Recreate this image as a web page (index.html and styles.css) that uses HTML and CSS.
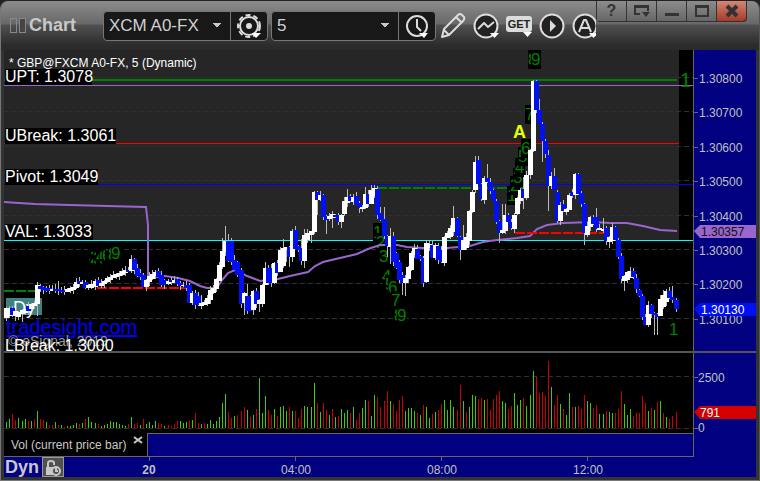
FILE: index.html
```
<!DOCTYPE html>
<html lang="en">
<head>
  <meta charset="UTF-8">
  <title>Chart</title>
  <link rel="stylesheet" href="styles.css">
</head>
<body>
  <div class="window">
    <header class="titlebar">
      <div class="toolbar">
        <span class="grip"></span>
        <h1>Chart</h1>
        <div class="combo">
          <select class="symbol" aria-label="Symbol"><option>XCM A0-FX</option></select>
          <button title="Settings">
            <svg width="26" height="26" viewBox="0 0 26 26">
              <circle class="teeth" cx="13" cy="13" r="11"/>
              <circle class="ring" cx="13" cy="13" r="9"/>
              <circle class="solid" cx="13" cy="13" r="3"/>
              <path class="drop" d="M16 20h9l-5 5z"/>
            </svg>
          </button>
        </div>
        <div class="combo combo-wide">
          <select class="interval" aria-label="Interval"><option>5</option></select>
          <button title="Time template">
            <svg width="26" height="26" viewBox="0 0 26 26">
              <circle class="ring" cx="13" cy="13" r="10"/>
              <path class="stroke" d="M13 6v8l4 4"/>
              <path class="drop" d="M15 20h9l-4 5z"/>
            </svg>
          </button>
        </div>
        <div class="tools">
          <button title="Draw">
            <svg width="26" height="26" viewBox="0 0 26 26">
              <path class="pencil" d="M2 24l2-8L18 2q2-2 4 0l2 2q1 2-1 4L9 22zM16 4l6 6M4 17l5 5"/>
            </svg>
          </button>
          <button title="Studies">
            <svg width="26" height="26" viewBox="0 0 26 26">
              <circle class="ring" cx="13" cy="13" r="11.500"/>
              <path class="stroke" d="M5 16l6-6 4 4 6-5"/>
              <path class="drop" d="M17 20h9l-4.500 5z"/>
            </svg>
          </button>
          <button title="GET">
            <svg width="26" height="26" viewBox="0 0 26 26">
              <rect class="solid" x="0" y="3" width="26" height="16" rx="3"/>
              <text class="get" x="13" y="15">GET</text>
              <path class="drop" d="M17 19h9l-4.500 5z"/>
            </svg>
          </button>
          <button title="Play">
            <svg width="26" height="26" viewBox="0 0 26 26">
              <circle class="ring" cx="13" cy="13" r="11.500"/>
              <path class="solid" d="M11 7l6 6-6 6z"/>
            </svg>
          </button>
          <button title="Annotate">
            <svg width="26" height="26" viewBox="0 0 26 26">
              <circle class="ring" cx="13" cy="13" r="11.500"/>
              <path class="stroke" d="M7 19l5-12h2l5 12M9 15h8"/>
              <path class="drop" d="M17 20h9l-4.500 5z"/>
            </svg>
          </button>
        </div>
      </div>
      <div class="controls">
        <button title="Help">?</button>
        <button title="Dock">
          <svg width="16" height="14" viewBox="0 0 16 14"><path d="M6 10H1V2h13v5M1 3h13"/><path class="fill" d="M8 8h8l-4 5z"/></svg>
        </button>
        <button title="Minimize">
          <svg width="16" height="14" viewBox="0 0 16 14"><path class="fill" d="M1 9h14v3H1z"/></svg>
        </button>
        <button title="Maximize">
          <svg width="16" height="14" viewBox="0 0 16 14"><path d="M2 2h12v10H2zM2 3h12"/></svg>
        </button>
        <button class="close" title="Close">
          <svg width="16" height="14" viewBox="0 0 16 14"><path class="cross" d="M3 2l10 10M13 2L3 12"/></svg>
        </button>
      </div>
    </header>

    <main>
      <svg class="pane" viewBox="4 50 752 301">
        <rect class="value-area" x="4" y="50" width="675" height="190"/>
        <g id="grid"></g>

        <path class="study red thin" d="M4 143.500H679"/>
        <path class="study violet thin" d="M4 85.500H693"/>
        <path class="study green" d="M4 80H677"/>
        <path class="study blue" d="M4 184.500H693"/>
        <path class="study cyan thin" d="M4 240.500H693"/>
        <path class="study green dashed" d="M4 291H40M377 188H525"/>

        <text class="title" x="9" y="67">* GBP@FXCM A0-FX, 5 (Dynamic)</text>
        <g id="levels"></g>

        <rect class="badge" x="6" y="298" width="36" height="17"/>
        <text class="badge-text" x="13" y="314">Dy</text>
        <a href="#"><text class="site" x="6" y="334">tradesight.com</text></a>
        <text class="copyright" x="8" y="346">© eSignal, 2019</text>
        <text class="level" x="5" y="351">LBreak: 1.3000</text>

        <g id="counts"></g>
        <text class="signal" x="513" y="138">A</text>

        <path class="study violet" d="M4 202L19 203 35 204 70 205 107 206 146 207 148 225 148 276 155 277 165 276 178 278 190 281 200 286 207 288 217 288 222 280 228 273 235 270 240 272 247 276 255 279 260 281 278 279 290 276 308 272 315 266 323 262 340 258 357 254 368 249 380 245 397 245 407 247 423 248 447 248 470 246 483 242 497 240 517 238 530 236 537 229 547 225 563 223 593 222 610 223 627 223 643 226 660 230 677 231"/>
        <path class="study red dashed" d="M97 288H187M515 233H605"/>
        <g id="candles"></g>

        <rect class="axis" x="693" y="50" width="63" height="301"/>
        <path class="axis-line" d="M693.500 50V351"/>
        <g id="prices"></g>
        <path class="violet-fill" d="M694 231l6-6h56v13h-56z"/>
        <text class="tag dark" x="701" y="236">1.30357</text>
        <path class="blue-fill" d="M694 309l6-6h56v13h-56z"/>
        <text class="tag" x="701" y="314">1.30130</text>
      </svg>

      <svg class="pane volume" viewBox="4 353 752 80">
        <path class="grid" d="M4 376.500H693M4 428.500H693"/>
        <g id="volume"></g>
        <rect class="axis" x="693" y="353" width="63" height="80"/>
        <path class="axis-line" d="M693.500 353V433M694 377.500H698M694 428.500H698"/>
        <text class="axis-label" x="698" y="382">2500</text>
        <text class="axis-label" x="698" y="432">0</text>
        <path class="red-fill" d="M694 412l6-6h56v13h-56z"/>
        <text class="tag" x="700" y="417">791</text>
      </svg>

      <div class="strip">
        <div class="tab">
          <span>Vol (current price bar)</span>
          <button title="Remove study">
            <svg width="10" height="8" viewBox="0 0 10 8"><path d="M1 1l8 6M9 1L1 7"/></svg>
          </button>
        </div>
        <div class="scroll"></div>
      </div>

      <footer class="timeline">
        <strong>Dyn</strong>
        <button title="Lock time scale">
          <svg width="18" height="18" viewBox="0 0 18 18">
            <path d="M4 8V4q0-2 3-2t3 2v2"/>
            <path class="fill" d="M2 8h8v8H2z"/>
            <circle cx="12" cy="12" r="4"/>
            <path d="M12 9v3h2"/>
          </svg>
        </button>
        <svg class="times" viewBox="64 457 692 20">
          <path class="axis-line" d="M149.500 457V461M295.500 457V461M441.500 457V461M587.500 457V461"/>
          <text class="time day" x="149" y="474">20</text>
          <text class="time" x="296" y="474">04:00</text>
          <text class="time" x="442" y="474">08:00</text>
          <text class="time" x="588" y="474">12:00</text>
        </svg>
      </footer>
    </main>
  </div>

  <script src="chart.js"></script>
</body>
</html>
```
FILE: styles.css
```
body {
  margin: 0;
  background-color: #222;
  font-family: "Liberation Sans", Arial, sans-serif;
  font-size: 12px;
}
button {
  margin: 0;
  padding: 0;
  border: none;
  background: none;
  font-family: inherit;
  cursor: pointer;
}
svg {
  display: block;
}
.window {
  margin-top: 1px;
  padding: 0 3px 3px;
  border-left: 1px solid #777;
  border-right: 1px solid #555;
  border-bottom: 1px solid #777;
  border-radius: 8px 8px 0 0;
  background-color: #333;
  overflow: hidden;
}

/* title bar */
.titlebar {
  display: flex;
  height: 49px;
  margin: 0 -3px;
  background: linear-gradient(#8c8c8c, #686868 23px, #505050 24px, #2c2c2c 44px, #2a2a2a);
}
.toolbar {
  display: flex;
  align-items: center;
  flex: 1;
  min-width: 0;
  padding-left: 9px;
  overflow: hidden;
}
.grip {
  flex: none;
  width: 5px;
  height: 13px;
  margin-right: 12px;
  border: 1px solid #888;
  box-shadow: 9px 0 0 -1px #444, 9px 0 0 #888;
}
h1 {
  width: 74px;
  margin: 0;
  color: #c8c8c8;
  font-size: 18px;
  flex: none;
}
.combo {
  display: flex;
  flex: none;
  box-sizing: border-box;
  width: 165px;
  height: 30px;
  margin-right: 3px;
  border: 1px solid #777;
  border-radius: 4px;
  background-color: #181818;
}
.combo-wide {
  margin-right: 4px;
}
.combo select {
  flex: 1;
  padding: 0 5px;
  border: none;
  border-right: 1px solid #777;
  appearance: none;
  background: linear-gradient(to top right, transparent 50%, #c8c8c8 51%) right 13px center / 5px 5px no-repeat,
    linear-gradient(to top left, transparent 50%, #c8c8c8 51%) right 8px center / 5px 5px no-repeat;
  color: #d0d0d0;
  font-family: inherit;
  font-size: 17px;
}
.combo button {
  display: flex;
  justify-content: center;
  align-items: center;
  width: 36px;
}
.tools {
  display: flex;
  flex: none;
  gap: 7px;
}
.toolbar svg {
  stroke-linejoin: round;
}
.ring, .stroke, .teeth, .pencil {
  fill: none;
  stroke: #dcdcdc;
  stroke-width: 2px;
}
.tools .ring {
  fill: #222;
}
.teeth {
  stroke-dasharray: 5 3;
}
.solid {
  fill: #dcdcdc;
}
.drop {
  fill: #fff;
}
.get {
  fill: #222;
  font-size: 11px;
  font-weight: bold;
  text-anchor: middle;
}
.controls {
  display: flex;
  align-self: flex-start;
  gap: 1px;
  height: 20px;
  margin-right: 12px;
  padding: 0 1px 1px;
  border-radius: 0 0 4px 4px;
  background-color: #333;
}
.controls button {
  display: flex;
  justify-content: center;
  align-items: center;
  width: 29px;
  background: linear-gradient(#8c8c8c, #666);
  color: #333;
  font-size: 16px;
  font-weight: bold;
}
.controls path {
  fill: none;
  stroke: #333;
  stroke-width: 2px;
}
.controls .fill {
  fill: #333;
  stroke: none;
}
.controls .cross {
  stroke-width: 4px;
}
.controls .close {
  border-radius: 0 0 4px 0;
  background: linear-gradient(#d08878, #a83a28);
}

/* chart panes */
.pane {
  width: 100%;
  height: auto;
  background-color: #000;
}
.volume {
  border-top: 2px solid #555;
}
.value-area {
  fill: #262626;
}
.black {
  fill: #000;
}
.axis {
  fill: #000080;
}
.axis-line {
  stroke: #666;
}
.grid {
  stroke: #303030;
  stroke-dasharray: 5 3;
}
.study {
  fill: none;
  stroke-width: 2px;
}
.thin {
  stroke-width: 1px;
}
.dashed {
  stroke-dasharray: 10 2;
}
.green { stroke: #008000; }
.red { stroke: #f00; }
.blue { stroke: #00f; stroke-width: 1px; }
.cyan { stroke: #0ff; }
.violet { stroke: #9966cc; }
.violet-fill { fill: #9966cc; }
.blue-fill { fill: #0010f0; }
.red-fill { fill: #d40000; }
.title {
  fill: #fff;
  font-size: 12px;
}
.level {
  fill: #fff;
  font-size: 16px;
}
.badge {
  fill: #408080;
}
.badge-text {
  fill: #fff;
  font-size: 18px;
}
.site {
  fill: #00f;
  font-size: 20px;
  text-decoration: underline;
}
.copyright {
  fill: #999;
  font-size: 14px;
}
.count {
  fill: #008000;
  font-size: 17px;
}
.last {
  font-size: 20px;
}
.signal {
  fill: #e6ff00;
  font-size: 18px;
  font-weight: bold;
}
.wick { fill: #bbb; }
.up { fill: #fff; }
.down { fill: #0010f0; }
.vol-up { fill: #4c0; }
.vol-down { fill: #c00; }
.axis-label, .time {
  fill: #c0c0c0;
  font-size: 12px;
}
.tag {
  fill: #fff;
  font-size: 12px;
}
.dark {
  fill: #101010;
}
.time {
  text-anchor: middle;
}
.day {
  font-weight: bold;
}

/* study tab and time scale */
.strip {
  display: flex;
  height: 24px;
  padding-right: 62px;
  background-color: #000080;
}
.tab {
  display: flex;
  justify-content: space-between;
  box-sizing: border-box;
  width: 143px;
  padding: 3px 4px 0 7px;
  border-bottom: 1px solid #666;
  background-color: #000;
  color: #c8c8c8;
  line-height: 19px;
  white-space: nowrap;
}
.tab button {
  align-self: flex-start;
}
.tab path {
  stroke: #c8c8c8;
  stroke-width: 2px;
}
.scroll {
  flex: 1;
  border: 1px solid #666;
}
.timeline {
  display: flex;
  align-items: center;
  height: 20px;
  background-color: #000080;
}
.timeline strong {
  width: 38px;
  padding-left: 1px;
  box-sizing: border-box;
  color: #c8c8d0;
  font-size: 18px;
}
.timeline button {
  padding: 1px 0 0 1px;
  width: 22px;
  height: 20px;
  box-sizing: border-box;
  border: 1px solid #999;
  background-color: #505050;
}
.timeline button svg {
  fill: none;
  stroke: #c8c8c8;
  stroke-width: 2px;
}
.timeline button .fill {
  fill: #c8c8c8;
  stroke: none;
}
.timeline button circle {
  fill: #505050;
}
.times {
  flex: 1;
}
```
FILE: chart.js
```
// candle: direction, body top, body bottom, optional high and low
const CANDLES = `
w308,318,307,321 w308,316 b308,315,306,317 w311,316,310,321 w312,317,311,320 w310,314,309,322 w309,313 b306,311 w304,309 w303,306
w285,304,282,316 b286,289,284,292 b287,290 b288,291 b288,291 w289,291 b289,291,284 b289,291,281 b290,292 b290,292
w289,292 w288,291 w287,290 w282,288 b281,284,277 w282,284 b282,288,280,289 w285,288,284,290 w284,288,280 w281,287
b280,286 w283,286 w281,284 w278,282 w277,280 w275,278 w274,277 w273,276,271 w271,275 w270,273
b270,272,267 w259,271,255 b259,270,258 b268,276 b273,277,269 b275,287 w280,287,279,291 w276,282 w274,279,270 w272,276
b271,277,268 b275,285 b280,285 w281,284 b280,282 w280,283 b279,284,277 b283,286 w285,286 b285,288
b285,303,283 w293,303 b293,305,290 b296,305 w303,306,295 w302,305 w298,304,295 w290,300 w288,293,285 w279,289,278
w265,281 w251,267,238 w241,252,226 b241,261,234 b241,262 b260,270,255 b262,275 b270,304 w293,303,292,315 b296,311,284
b296,311 w291,310,290,315 b291,304 w300,304,299,312 w285,304 w268,285,262 b268,283 b268,283 w263,283 b263,273,260
w250,272 w248,266,239 w247,250,247,262 b247,257,246,267 w231,257,229,262 b230,249,226 b246,250 b248,261,239 w235,261,229,268 w233,240
w231,235,231,243 w192,232,191 b192,200,191,215 w195,200 b195,217 b216,220,215,234 w216,219 w214,218,211,228 b215,217 b215,222
w215,222,214,228 w201,214 w197,203,189 b196,201 w197,202 b196,204 b203,208,201,213 w207,209,205,212 w194,208,187 b194,204
w190,204,185 w188,196,185 b189,215 b213,220,207 b219,236,207 b236,246,235,257 w236,247,228,264 b236,262 b253,268 b262,280
b275,283,272,295 w278,283,275,296 w267,279 w253,270 w248,255,244 b249,259 b256,259 b258,283 w243,282 w244,248,240
b245,258,240 w245,258 b246,260 b250,262 w237,263 w233,238 w228,237 w218,232,206 b218,236 b237,250,236,260
w240,250,225 w237,248 w211,241 w192,212 w162,190,156 b160,184,156 b184,199 w178,200 b178,182,164 b182,191
b190,201 b201,222 b221,233,220,243 w230,233,204 w215,231,204 b215,222 b222,228 w215,229,213 w198,214 w190,201
b189,198,177,209 w175,198 w150,175 w81,151,80 b81,110,80 b110,124,99 b124,141,122,162 b141,154 b155,186,150,211 w176,186
b176,190,168 b192,221 w205,221 b204,211 w209,212 w195,210 b192,196 w174,195,173 b174,194 b193,204
b204,233,203,245 w226,235 w217,227 b217,224 b217,229,208 w228,230 w229,231,218 b228,241 w237,242,236,248 w227,241
b227,240 b240,257 b256,279 w276,281,275,291 w272,280 w271,278,267 b271,277 b278,289 b290,296 b296,317
b317,325 w305,325 b305,314 b313,315,312,335 b314,317,313,335 w299,316 w295,307,290 w291,302 b291,298,287 b297,300,286
b300,309,298,312`.trim().split(/\s+/);

const VOLUME = `
6g 9g 14r 8r 10g 7g 9g 7r 7g 9r 17g 9r 8r 6g 3r 3r 6g 3r 3g 1r
2g 2g 3g 5g 4r 5g 9r 11g 6g 5g 4r 2g 3g 4g 7g 6g 6g 4g 3g 2g
4r 11g 4r 5r 3g 9r 4g 6g 3g 7g 5r 4r 2g 3r 2r 4r 7r 7g 5g 6g
7r 8g 15r 5r 4g 5r 4g 8g 4g 7g 11g 25g 34g 16r 10r 12g 13r 17r 21r 18g
11r 13g 19r 50g 15g 32g 18r 13r 19g 12r 21g 22g 17g 21r 17g 17r 10r 19r 22g 21g
21g 45g 25r 16g 25r 18r 13g 19r 11g 12r 19g 15g 18g 15r 21g 8r 15r 20g 28g 27r
12g 33g 31r 21r 27r 37r 27g 24r 17r 28r 32r 17g 20g 20g 17g 15r 13g 23r 21g 10g
14r 16g 18r 24r 28g 18g 28g 21g 18r 43r 27g 16r 21g 33g 32g 29r 30r 28g 29r 18r
29r 33r 37r 27g 25g 19r 22r 35g 23g 28g 30r 22g 33g 57g 51r 35r 36r 32r 67r 41g
23r 33r 24g 19r 13g 35g 21r 21g 22r 19r 33r 27g 25g 20r 23r 14g 14g 17r 16g 15g
15r 19r 37r 24g 13g 19g 12r 15r 15r 32r 25r 17g 20r 18g 26r 27g 15r 11g 9r 12r
16r`.trim().split(/\s+/);

const LEVELS = [
  ['UPT: 1.3078', 82, 87],
  ['UBreak: 1.3061', 141, 111],
  ['Pivot: 1.3049', 182, 93],
  ['VAL: 1.3033', 237, 88],
];

// bar counts: digit, x, baseline
const COUNTS = [
  [1, 88, 260], [2, 90, 263], [3, 93, 264], [4, 96, 262], [5, 99, 264], [6, 102, 261], [7, 105, 261], [8, 108, 260], [9, 111, 259],
  [1, 373, 238], [2, 376, 248], [3, 379, 262], [4, 382, 282], [5, 385, 290], [6, 388, 293], [7, 391, 306], [8, 394, 321], [9, 397, 321],
  [1, 507, 201], [2, 510, 191], [3, 513, 183], [4, 515, 173], [5, 518, 162], [6, 521, 154], [7, 525, 120], [8, 528, 65], [9, 531, 65],
  [1, 669, 335],
];

const barX = i => Math.floor(6.8 + i * 3.042);
const rect = (cls, x, y, w, h) => `<rect class="${cls}" x="${x}" y="${y}" width="${w}" height="${h}"/>`;
const text = (cls, x, y, s) => `<text class="${cls}" x="${x}" y="${y}">${s}</text>`;
const fill = (id, html) => { document.getElementById(id).innerHTML = html; };

fill('candles', CANDLES.map((c, i) => {
  const [top, bottom, high = top - 1 - i % 4, low = bottom + (i * 7) % 5] = c.slice(1).split(',').map(Number);
  const x = barX(i);
  return rect('wick', x, high, 1, low - high) +
    rect(c[0] === 'w' ? 'up' : 'down', x - 2, top, 5, bottom - top);
}).join(''));

fill('volume', VOLUME.map((v, i) => {
  const h = parseInt(v);
  return rect(v.endsWith('g') ? 'vol-up' : 'vol-down', barX(i), 428 - h, 1, h);
}).join(''));

let grid = '';
let prices = '';
for (let i = 0; i < 8; i++) {
  const y = Math.round(78 + i * 34.4);
  grid += `<path class="grid" d="M4 ${y - 0.5}H693"/>`;
  prices += `<path class="axis-line" d="M694 ${y + 0.5}H698"/>` +
    text('axis-label', 699, y + 5, (1.308 - i * 0.001).toFixed(5));
}
fill('grid', grid);
fill('prices', prices);

fill('levels', LEVELS.map(([label, y, w]) =>
  rect('black', 5, y - 13, w, 16) + text('level', 5, y, label)).join(''));

fill('counts', COUNTS.map(([n, x, y]) =>
  rect('black', x, y - 15, 10, 19) + text('count', x, y, n)).join('') +
  text('count last', 680, 87, 1));
```
